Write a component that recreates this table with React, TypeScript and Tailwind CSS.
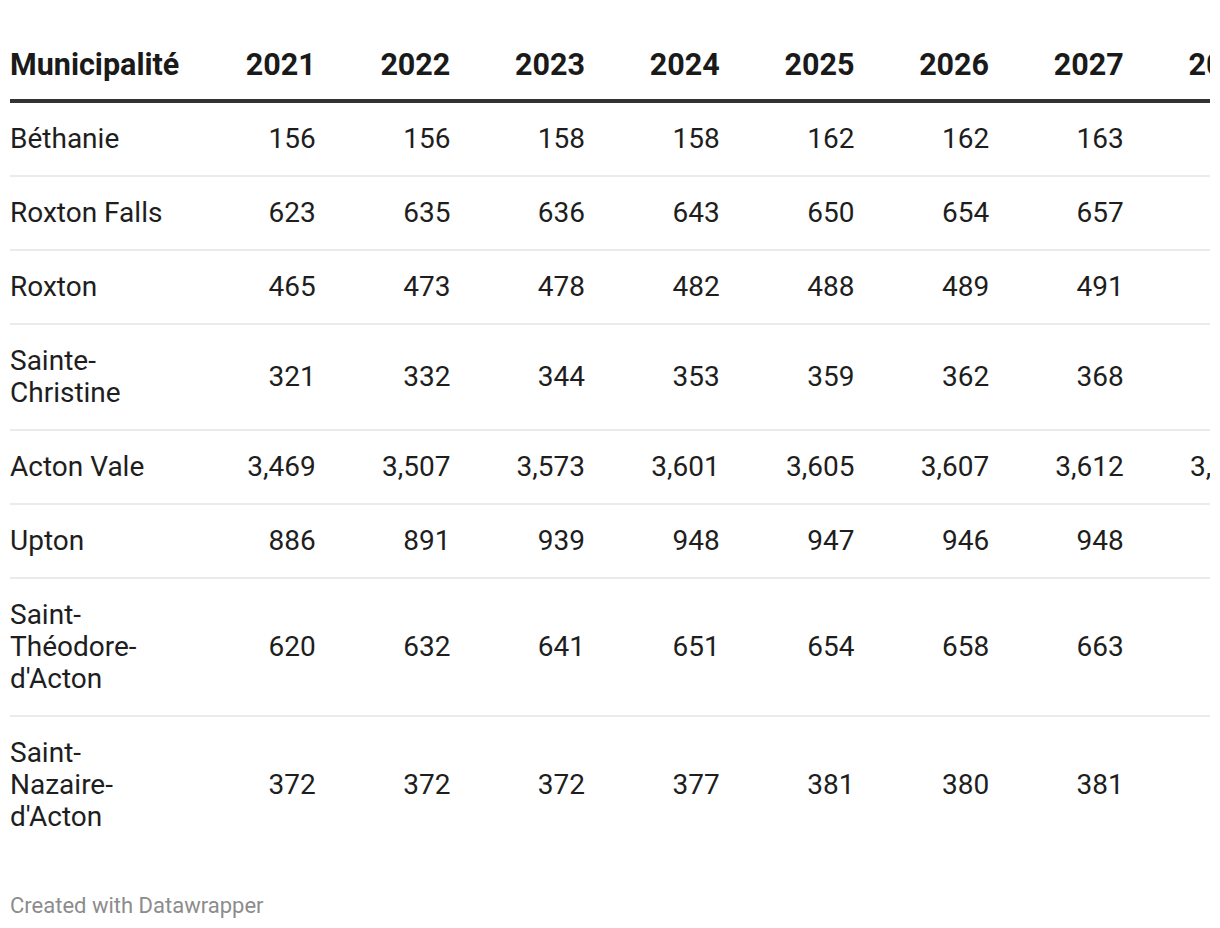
import React from "react";

const years = ["2021", "2022", "2023", "2024", "2025", "2026", "2027", "2028"];

const rows: { name: string; values: string[] }[] = [
  { name: "Béthanie", values: ["156", "156", "158", "158", "162", "162", "163", "164"] },
  { name: "Roxton Falls", values: ["623", "635", "636", "643", "650", "654", "657", "660"] },
  { name: "Roxton", values: ["465", "473", "478", "482", "488", "489", "491", "493"] },
  { name: "Sainte-Christine", values: ["321", "332", "344", "353", "359", "362", "368", "371"] },
  { name: "Acton Vale", values: ["3,469", "3,507", "3,573", "3,601", "3,605", "3,607", "3,612", "3,618"] },
  { name: "Upton", values: ["886", "891", "939", "948", "947", "946", "948", "951"] },
  { name: "Saint-Théodore-d'Acton", values: ["620", "632", "641", "651", "654", "658", "663", "667"] },
  { name: "Saint-Nazaire-d'Acton", values: ["372", "372", "372", "377", "381", "380", "381", "383"] },
];

export default function App() {
  return (
    <div
      className="bg-white w-[1220px] h-[928px] overflow-hidden"
      style={{ fontFamily: "Roboto, 'Liberation Sans', sans-serif" }}
    >
      <div className="mx-[10px] w-[1200px] overflow-hidden pt-[47px]">
        <table className="table-fixed border-collapse w-[1248px]">
          <colgroup>
            <col className="w-[171px]" />
            {years.map((y) => (
              <col key={y} className="w-[134.7px]" />
            ))}
          </colgroup>
          <thead>
            <tr className="border-b-[4px] border-[#333333]">
              <th className="text-left font-bold text-[30.5px] leading-[36px] text-[#1a1a1a] pb-[16px] pr-[6px] whitespace-nowrap">
                Municipalité
              </th>
              {years.map((y) => (
                <th
                  key={y}
                  className="text-right font-bold text-[30.5px] leading-[36px] text-[#1a1a1a] pb-[16px] whitespace-nowrap"
                >
                  {y}
                </th>
              ))}
            </tr>
          </thead>
          <tbody>
            {rows.map((r, i) => (
              <tr
                key={r.name}
                className={i < rows.length - 1 ? "border-b-[2px] border-[#ebebeb]" : ""}
              >
                <td className="text-left align-middle text-[28px] leading-[32px] text-[#1e1e1e] py-[20px] pr-[12px] break-words">
                  {r.name}
                </td>
                {r.values.map((v, j) => (
                  <td
                    key={j}
                    className="text-right align-middle text-[28px] leading-[32px] text-[#1e1e1e] py-[20px] whitespace-nowrap"
                  >
                    {v}
                  </td>
                ))}
              </tr>
            ))}
          </tbody>
        </table>
      </div>
      <div className="px-[10px] mt-[40px] text-[22px] leading-[26px] text-[#8c8c8c]">
        Created with Datawrapper
      </div>
    </div>
  );
}
